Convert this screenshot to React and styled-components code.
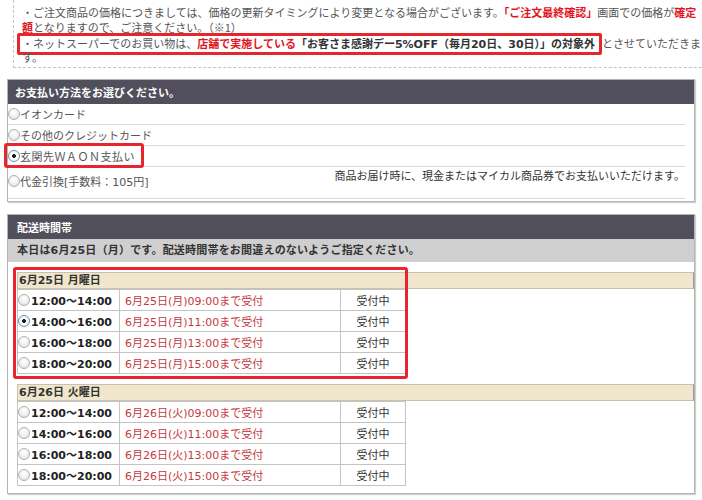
import React from "react";
import styled, { createGlobalStyle, css } from "styled-components";

const GlobalStyle = createGlobalStyle`
  html, body {
    margin: 0;
    padding: 0;
    background: #fff;
  }
  body {
    font-family: "DejaVu Sans", "Noto Sans CJK JP", sans-serif;
    font-size: 11px;
    color: #444;
  }
`;

const Page = styled.div`
  width: 702px;
  height: 500px;
  overflow: hidden;
  padding: 0 7px;
  box-sizing: border-box;
`;

const Notice = styled.div`
  width: 820px;
  margin-left: 6px;
  padding: 5px 0 2px 8px;
  border-left: 1px dashed #c4c4c4;
  border-bottom: 1px dashed #c4c4c4;
  font-family: "Noto Sans CJK JP", sans-serif;
  color: #555;
  line-height: 15px;
  white-space: nowrap;
`;

const NoticeLine = styled.div`
  height: 15px;
`;

const Em = styled.span`
  color: #e2141c;
  font-weight: bold;
`;

const Strong = styled.span`
  font-family: "DejaVu Sans", "Noto Sans CJK JP", sans-serif;
  color: #333;
  font-weight: bold;
`;

const Marked = styled.span`
  display: inline-block;
  line-height: 14px;
  margin: -2px 0 -4px -5px;
  padding: 0 4px 0 2px;
  border: 3px solid #e6262c;
  border-radius: 2px;
`;

const Panel = styled.section`
  margin-top: ${(p) => p.$gap}px;
  border: 1px solid #b4b4b4;
  box-shadow: 1px 1px 1px #d0d0d0;
  background: #fff;
`;

const PanelHeader = styled.h2`
  margin: 0;
  height: 24px;
  line-height: 24px;
  padding-left: ${(p) => p.$indent}px;
  background: #504f5b;
  color: #fff;
  font-size: 11px;
  font-weight: bold;
  font-family: "Noto Sans CJK JP", sans-serif;
`;

const PayList = styled.div`
  padding: 0 9px 2px 0;
`;

const PayRow = styled.label`
  position: relative;
  display: flex;
  align-items: ${(p) => (p.$tall ? "flex-start" : "center")};
  justify-content: space-between;
  height: ${(p) => (p.$tall ? 31 : 20)}px;
  border-bottom: 1px solid #dcdcdc;
  color: #555;
`;

const PayLabel = styled.span`
  display: flex;
  align-items: center;
  margin-top: ${(p) => (p.$tall ? 6 : 0)}px;
  letter-spacing: ${(p) => (p.$wide ? "0.5px" : "0")};
`;

const PayNote = styled.span`
  color: #333;
`;

const Highlight = styled.span`
  position: absolute;
  border: 3px solid #e6262c;
  border-radius: 3px;
  pointer-events: none;
`;

const Radio = styled.span`
  display: inline-block;
  flex-shrink: 0;
  width: 12px;
  height: 12px;
  box-sizing: border-box;
  border-radius: 50%;
  border: 1px solid #b0b0b0;
  background: radial-gradient(circle at 50% 35%, #fff 0, #f3f3f3 45%, #d9d9d9 100%);
  ${(p) =>
    p.$checked &&
    css`
      border-color: #6e8db6;
      background: radial-gradient(circle, #1d1d1d 0 1.6px, #fff 2.2px, #eef3fa 100%);
    `}
`;

const Band = styled.div`
  height: 23px;
  line-height: 23px;
  padding-left: 9px;
  background: #cfcfcf;
  color: #333;
  font-weight: bold;
  letter-spacing: 0.2px;
`;

const Days = styled.div`
  display: flex;
  flex-direction: column;
  gap: 10px;
  padding: 10px 0 7px 9px;
`;

const DayBlock = styled.div`
  position: relative;
`;

const DayTitle = styled.div`
  height: 15px;
  line-height: 15px;
  padding-left: 1px;
  background: #efe6cd;
  border: 1px solid #c9c1ab;
  border-right-color: #999;
  font-weight: bold;
  color: #333;
`;

const SlotTable = styled.table`
  border-collapse: collapse;
  width: 389px;
  table-layout: fixed;
`;

const Cell = styled.td`
  height: 20px;
  padding: 0;
  border: 1px solid #c4c4c4;
  white-space: nowrap;
`;

const TimeCell = styled(Cell)`
  width: 101px;
`;

const TimeLabel = styled.span`
  display: flex;
  align-items: center;
  gap: 1px;
  font-weight: bold;
  color: #222;
`;

const DeadlineCell = styled(Cell)`
  width: 215px;
  padding-left: 5px;
  color: #c5393e;
`;

const StatusCell = styled(Cell)`
  text-align: center;
  color: #333;
`;

const payments = [
  { label: "イオンカード" },
  { label: "その他のクレジットカード" },
  { label: "玄関先ＷＡＯＮ支払い", checked: true, marked: true, wide: true },
  {
    label: "代金引換[手数料：105円]",
    note: "商品お届け時に、現金またはマイカル商品券でお支払いいただけます。",
    tall: true,
  },
];

const slots = [
  ["12:00〜14:00", "09:00"],
  ["14:00〜16:00", "11:00"],
  ["16:00〜18:00", "13:00"],
  ["18:00〜20:00", "15:00"],
];

const days = [
  { title: "6月25日 月曜日", date: "6月25日(月)", selected: 1, marked: true },
  { title: "6月26日 火曜日", date: "6月26日(火)", selected: -1 },
];

function App() {
  return (
    <Page>
      <GlobalStyle />
      <Notice>
        <NoticeLine>
          ・ご注文商品の価格につきましては、価格の更新タイミングにより変更となる場合がございます。
          <Em>「ご注文最終確認」</Em>画面での価格が<Em>確定</Em>
        </NoticeLine>
        <NoticeLine>
          <Em>額</Em>となりますので、ご注意ください。（※1）
        </NoticeLine>
        <NoticeLine>
          <Marked>
            ・ネットスーパーでのお買い物は、<Em>店舗で実施している</Em>
            <Strong>「お客さま感謝デー5%OFF（毎月20日、30日）」の対象外</Strong>
          </Marked>
          とさせていただきま
        </NoticeLine>
        <NoticeLine>す。</NoticeLine>
      </Notice>

      <Panel $gap={11}>
        <PanelHeader $indent={7}>お支払い方法をお選びください。</PanelHeader>
        <PayList>
          {payments.map((p) => (
            <PayRow key={p.label} $tall={p.tall}>
              <PayLabel $tall={p.tall} $wide={p.wide}>
                <Radio $checked={p.checked} />
                {p.label}
              </PayLabel>
              {p.note && <PayNote>{p.note}</PayNote>}
              {p.marked && (
                <Highlight style={{ left: -4, top: -3, bottom: -2, width: 134 }} />
              )}
            </PayRow>
          ))}
        </PayList>
      </Panel>

      <Panel $gap={12}>
        <PanelHeader $indent={9}>配送時間帯</PanelHeader>
        <Band>本日は6月25日（月）です。配送時間帯をお間違えのないようご指定ください。</Band>
        <Days>
          {days.map((d) => (
            <DayBlock key={d.title}>
              <DayTitle>{d.title}</DayTitle>
              <SlotTable>
                <tbody>
                  {slots.map(([time, limit], i) => (
                    <tr key={time}>
                      <TimeCell>
                        <TimeLabel>
                          <Radio $checked={i === d.selected} />
                          {time}
                        </TimeLabel>
                      </TimeCell>
                      <DeadlineCell>
                        {d.date}
                        {limit}まで受付
                      </DeadlineCell>
                      <StatusCell>受付中</StatusCell>
                    </tr>
                  ))}
                </tbody>
              </SlotTable>
              {d.marked && (
                <Highlight style={{ left: -4, top: -5, bottom: -5, width: 389 }} />
              )}
            </DayBlock>
          ))}
        </Days>
      </Panel>
    </Page>
  );
}

export default App;
